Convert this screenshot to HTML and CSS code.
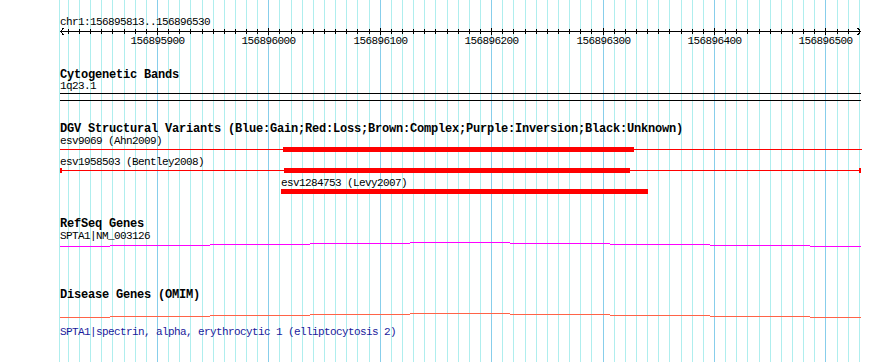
FILE: index.html
```html
<!DOCTYPE html>
<html lang="en">
<head>
    <meta charset="UTF-8">
    <title>chr1:156895813..156896530</title>
    <link rel="stylesheet" href="styles.css">
</head>
<body>

    <div class="panel">
        <!-- grid lines, filled in by script.js -->
        <svg class="grid" id="grid" width="890" height="362">
            <rect class="grid-minor" x="59" y="0" width="1" height="362"/>
        </svg>

        <svg class="ruler" id="ruler" width="890" height="52">
            <text class="small" x="60" y="25">chr1:156895813..156896530</text>
            <rect class="ink" x="60" y="31" width="801" height="1"/>
            <path class="arrow" d="M63.5,28 L60.5,31.5 L63.5,35"/>
            <path class="arrow" d="M857.5,28 L860.5,31.5 L857.5,35"/>
        </svg>

        <section class="track track-cyto">
            <div class="track-title">Cytogenetic Bands</div>
            <svg class="track-body" width="890" height="30">
                <text class="small" x="60" y="9">1q23.1</text>
                <rect class="ink" x="60" y="13" width="801" height="1"/>
                <rect class="ink" x="60" y="20" width="801" height="1"/>
            </svg>
        </section>

        <section class="track track-dgv">
            <div class="track-title">DGV Structural Variants (Blue:Gain;Red:Loss;Brown:Complex;Purple:Inversion;Black:Unknown)</div>
            <svg class="track-body" width="890" height="70">
                <text class="small" x="60" y="10">esv9069 (Ahn2009)</text>
                <rect class="loss" x="60" y="15" width="802" height="1"/>
                <rect class="loss" x="283" y="13" width="351" height="5"/>

                <text class="small" x="60" y="31">esv1958503 (Bentley2008)</text>
                <rect class="loss" x="60" y="36" width="800" height="1"/>
                <rect class="loss" x="60" y="34" width="2" height="5"/>
                <rect class="loss" x="859" y="34" width="2" height="5"/>
                <rect class="loss" x="284" y="34" width="346" height="5"/>

                <text class="small" x="281" y="52">esv1284753 (Levy2007)</text>
                <rect class="loss" x="281" y="55" width="367" height="5"/>
            </svg>
        </section>

        <section class="track track-refseq">
            <div class="track-title">RefSeq Genes</div>
            <svg class="track-body" width="890" height="30">
                <text class="small" x="60" y="10">SPTA1|NM_003126</text>
                <path class="hat hat-gene" d="M60,17.5H110M110,16.5H210M210,15.5H310M310,14.5H410M410,13.5H510M510,14.5H610M610,15.5H710M710,16.5H810M810,17.5H861"/>
            </svg>
        </section>

        <section class="track track-omim">
            <div class="track-title">Disease Genes (OMIM)</div>
            <svg class="track-body" width="890" height="62">
                <path class="hat hat-omim" d="M60,17.5H110M110,16.5H210M210,15.5H310M310,14.5H410M410,13.5H510M510,14.5H610M610,15.5H710M710,16.5H810M810,17.5H861"/>
                <text class="small omim-desc" x="60" y="35">SPTA1|spectrin, alpha, erythrocytic 1 (elliptocytosis 2)</text>
            </svg>
        </section>
    </div>

    <script src="script.js"></script>
</body>
</html>
```

FILE: styles.css
```css
* {
    margin: 0;
    padding: 0;
    box-sizing: border-box;
}

body {
    background: #ffffff;
    font-family: 'Liberation Mono', monospace;
    color: #000000;
}

.panel {
    position: relative;
    width: 890px;
    height: 362px;
    overflow: hidden;
}

svg {
    display: block;
    shape-rendering: crispEdges;
}

/* background grid sits under all tracks */
.grid {
    position: absolute;
    top: 0;
    left: 0;
}

.grid-minor {
    fill: #afeeee;
}

.grid-major {
    fill: #87ceeb;
}

.ruler,
.track {
    position: relative;
}

.small {
    font-family: 'Liberation Mono', monospace;
    font-size: 11px;
    letter-spacing: -0.6px;
    fill: #000000;
}

.tick-label {
    text-anchor: middle;
}

.ink,
.tick {
    fill: #000000;
}

.arrow {
    fill: none;
    stroke: #000000;
    stroke-width: 1;
}

.track-title {
    height: 13px;
    padding-left: 60px;
    font-size: 12px;
    font-weight: bold;
    line-height: 17px;
    letter-spacing: -0.2px;
    white-space: nowrap;
}

.track-cyto {
    margin-top: 15px;
}

.track-dgv {
    margin-top: 11px;
}

.track-refseq {
    margin-top: 12px;
}

.track-omim {
    margin-top: 28px;
}

.loss {
    fill: #ff0000;
}

.hat {
    fill: none;
    stroke-width: 1;
}

.hat-gene {
    stroke: #ff00ff;
}

.hat-omim {
    stroke: #ff6347;
}

.omim-desc {
    fill: #1a1a9c;
}
```

FILE: script.js
```js
const START = 156895813;
const END = 156896530;
const LEFT = 60;
const WIDTH = 800;
const scale = WIDTH / (END - START + 1);

function xOf(pos) {
    return Math.round(LEFT + (pos - START) * scale);
}

function add(parent, tag, attrs, text) {
    const el = document.createElementNS('http://www.w3.org/2000/svg', tag);
    for (const key in attrs) el.setAttribute(key, attrs[key]);
    if (text) el.textContent = text;
    parent.appendChild(el);
    return el;
}

const grid = document.getElementById('grid');
const ruler = document.getElementById('ruler');

// one line every 10 bp, a darker one every 100 bp
for (let pos = Math.ceil(START / 10) * 10; pos <= END; pos += 10) {
    const x = xOf(pos);
    const major = pos % 100 === 0;
    add(grid, 'rect', { x: x, y: 0, width: 1, height: 362, class: major ? 'grid-major' : 'grid-minor' });
    add(ruler, 'rect', { x: x, y: major ? 28 : 29, width: 1, height: major ? 7 : 5, class: 'tick' });
    if (major) {
        add(ruler, 'text', { x: x + 0.5, y: 44, class: 'small tick-label' }, String(pos));
    }
}
```
